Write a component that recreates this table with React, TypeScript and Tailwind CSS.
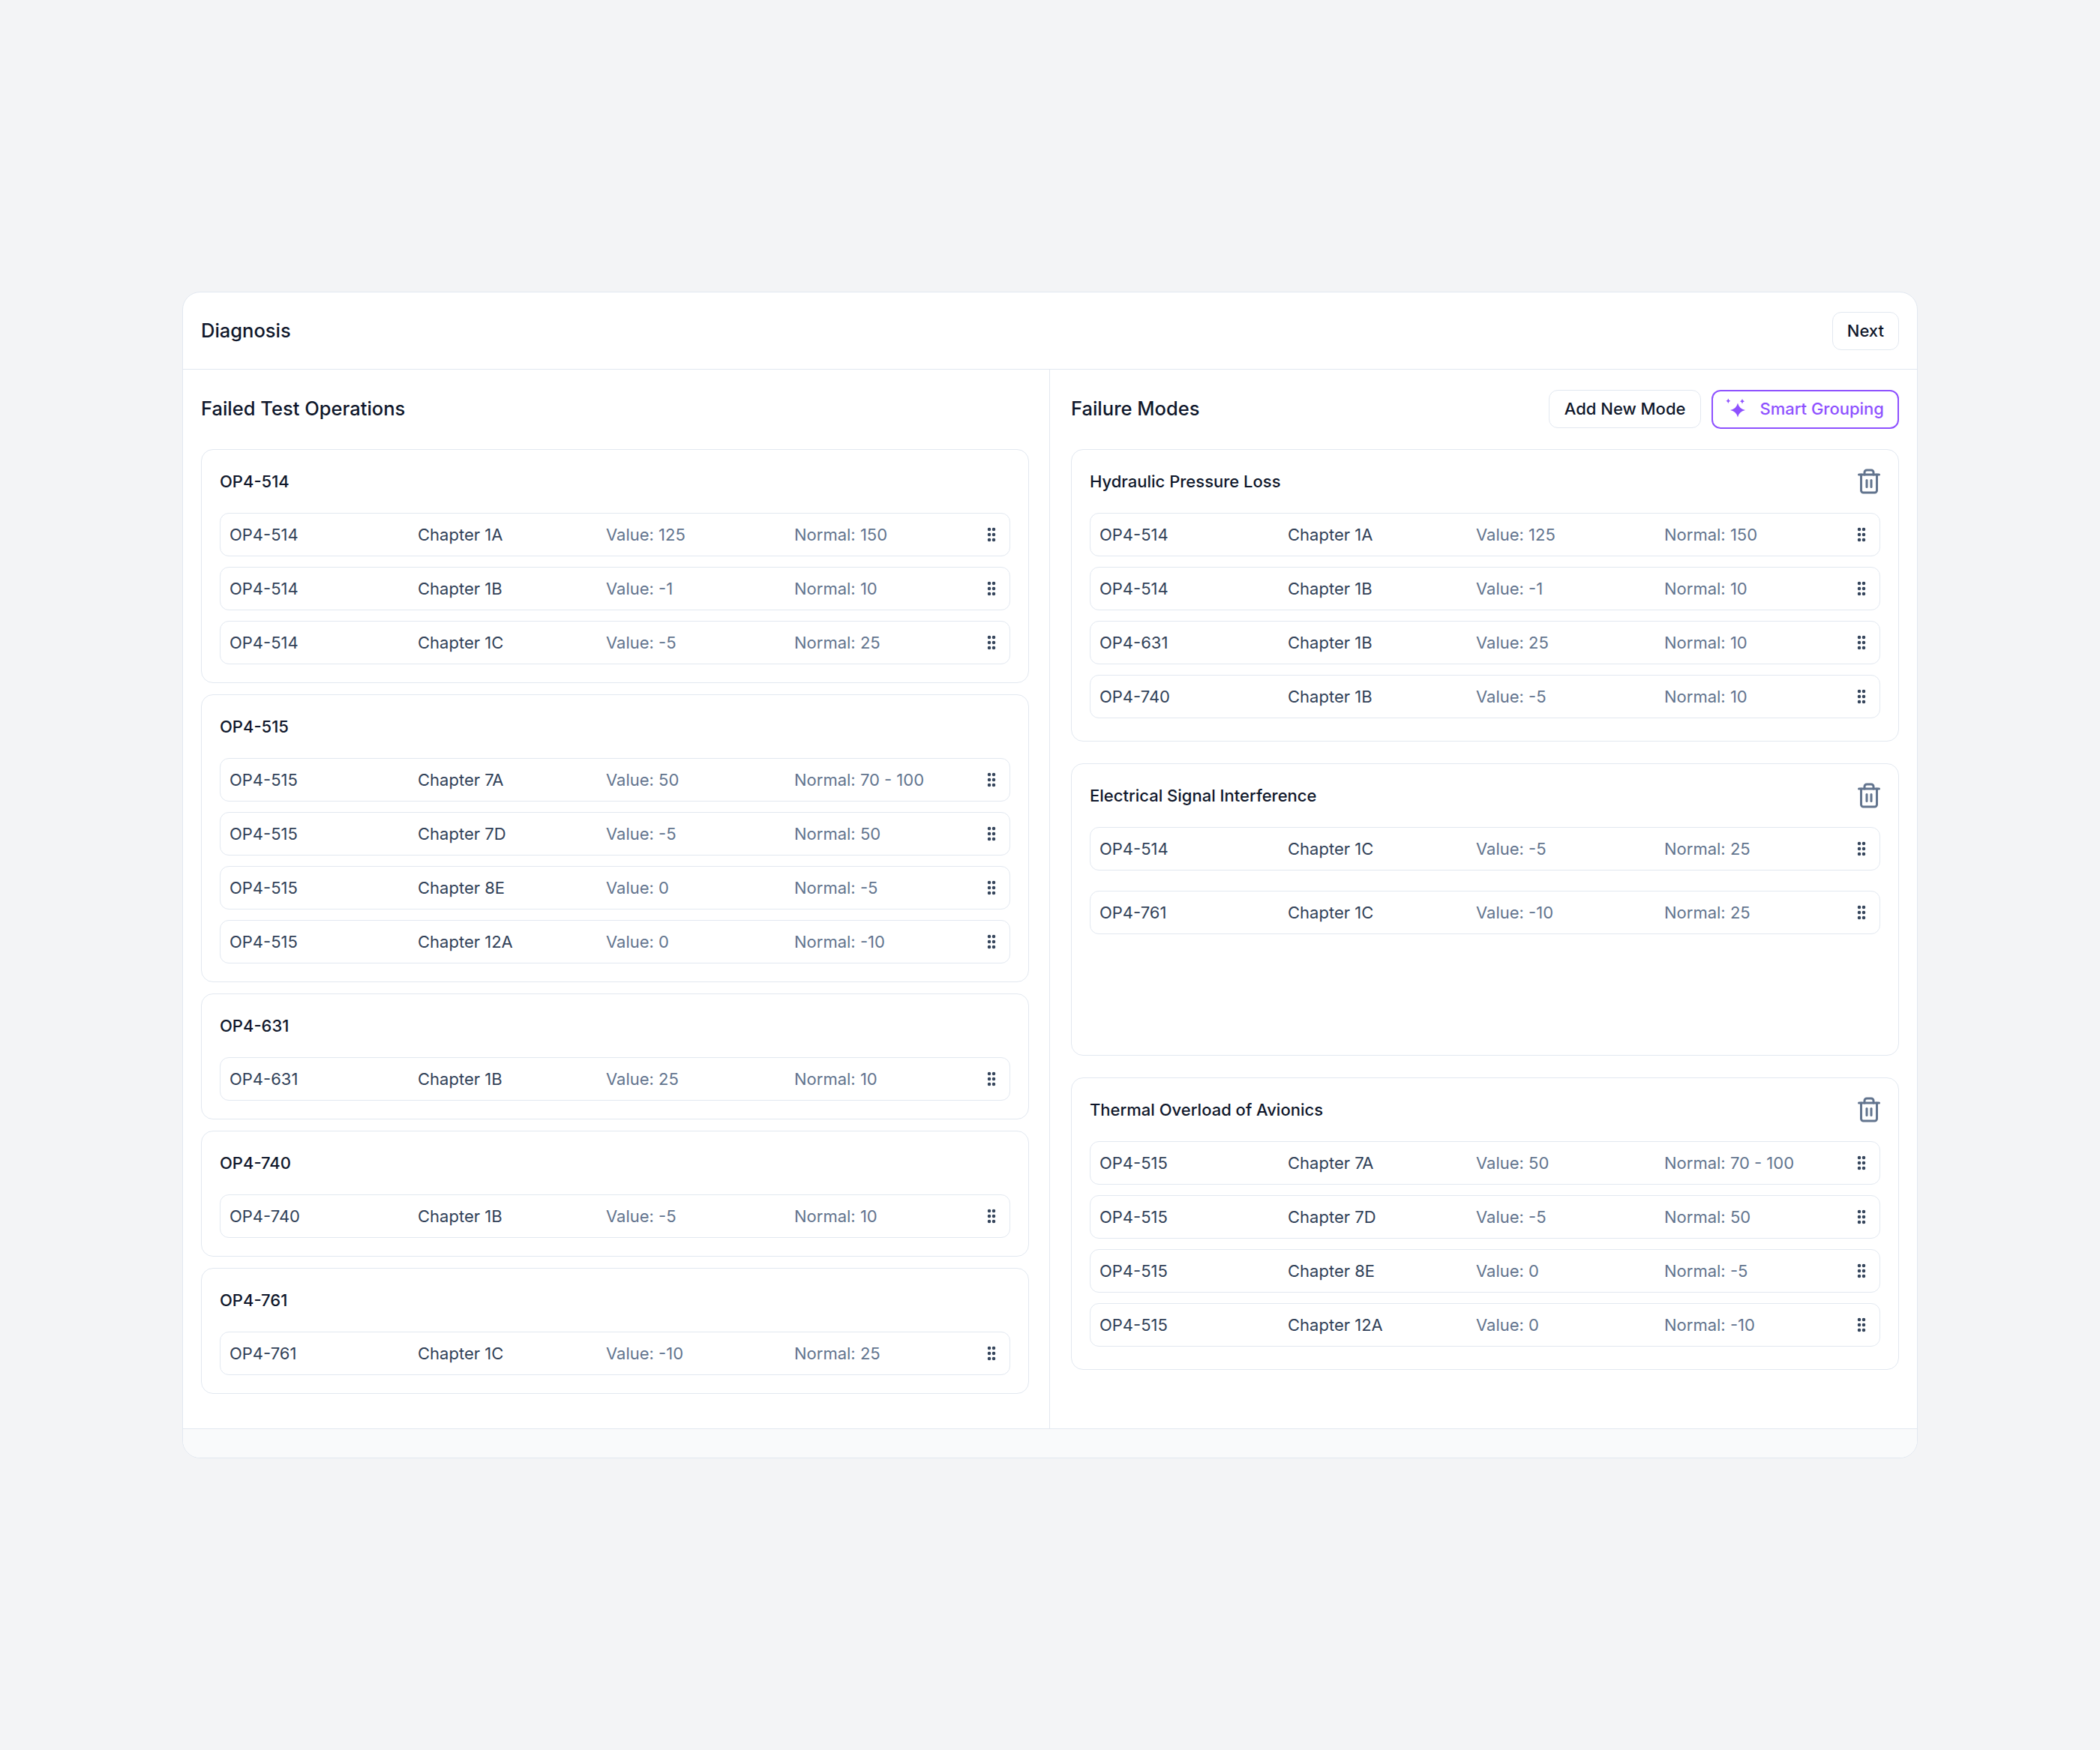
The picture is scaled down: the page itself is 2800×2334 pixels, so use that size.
import { GripVertical, Trash2 } from "lucide-react";

type Row = { op: string; chapter: string; value: string; normal: string };

const groups: { title: string; rows: Row[] }[] = [
  {
    title: "OP4-514",
    rows: [
      { op: "OP4-514", chapter: "Chapter 1A", value: "125", normal: "150" },
      { op: "OP4-514", chapter: "Chapter 1B", value: "-1", normal: "10" },
      { op: "OP4-514", chapter: "Chapter 1C", value: "-5", normal: "25" },
    ],
  },
  {
    title: "OP4-515",
    rows: [
      { op: "OP4-515", chapter: "Chapter 7A", value: "50", normal: "70 - 100" },
      { op: "OP4-515", chapter: "Chapter 7D", value: "-5", normal: "50" },
      { op: "OP4-515", chapter: "Chapter 8E", value: "0", normal: "-5" },
      { op: "OP4-515", chapter: "Chapter 12A", value: "0", normal: "-10" },
    ],
  },
  {
    title: "OP4-631",
    rows: [{ op: "OP4-631", chapter: "Chapter 1B", value: "25", normal: "10" }],
  },
  {
    title: "OP4-740",
    rows: [{ op: "OP4-740", chapter: "Chapter 1B", value: "-5", normal: "10" }],
  },
  {
    title: "OP4-761",
    rows: [{ op: "OP4-761", chapter: "Chapter 1C", value: "-10", normal: "25" }],
  },
];

const modes: { title: string; wide?: boolean; rows: Row[] }[] = [
  {
    title: "Hydraulic Pressure Loss",
    rows: [
      { op: "OP4-514", chapter: "Chapter 1A", value: "125", normal: "150" },
      { op: "OP4-514", chapter: "Chapter 1B", value: "-1", normal: "10" },
      { op: "OP4-631", chapter: "Chapter 1B", value: "25", normal: "10" },
      { op: "OP4-740", chapter: "Chapter 1B", value: "-5", normal: "10" },
    ],
  },
  {
    title: "Electrical Signal Interference",
    wide: true,
    rows: [
      { op: "OP4-514", chapter: "Chapter 1C", value: "-5", normal: "25" },
      { op: "OP4-761", chapter: "Chapter 1C", value: "-10", normal: "25" },
    ],
  },
  {
    title: "Thermal Overload of Avionics",
    rows: [
      { op: "OP4-515", chapter: "Chapter 7A", value: "50", normal: "70 - 100" },
      { op: "OP4-515", chapter: "Chapter 7D", value: "-5", normal: "50" },
      { op: "OP4-515", chapter: "Chapter 8E", value: "0", normal: "-5" },
      { op: "OP4-515", chapter: "Chapter 12A", value: "0", normal: "-10" },
    ],
  },
];

// four-point sparkle with pinched sides
const star = (cx: number, cy: number, rx: number, ry: number) => {
  const k = 0.18;
  return `M${cx} ${cy - ry} Q${cx + rx * k} ${cy - ry * k} ${cx + rx} ${cy} Q${cx + rx * k} ${cy + ry * k} ${cx} ${cy + ry} Q${cx - rx * k} ${cy + ry * k} ${cx - rx} ${cy} Q${cx - rx * k} ${cy - ry * k} ${cx} ${cy - ry}Z`;
};

const Sparkles = () => (
  <svg width="30" height="30" viewBox="0 0 30 30" className="text-violet-500">
    <path d={star(17, 16, 10, 9.5)} fill="currentColor" />
    <path d={star(4.3, 3.8, 3, 3.2)} fill="currentColor" />
    <path d={star(23, 4.2, 3, 3.2)} fill="currentColor" />
  </svg>
);

const TestRow = ({ row }: { row: Row }) => (
  <div className="flex h-[58px] items-center rounded-[12px] border border-slate-200 bg-white pl-[12px] pr-[12px] text-[22px]">
    <div className="grid flex-1 grid-cols-4">
      <span className="text-slate-700">{row.op}</span>
      <span className="text-slate-700">{row.chapter}</span>
      <span className="text-slate-500">Value: {row.value}</span>
      <span className="text-slate-500">Normal: {row.normal}</span>
    </div>
    <GripVertical size={24} strokeWidth={2.5} className="text-slate-700" />
  </div>
);

export default function App() {
  return (
    <div className="flex min-h-screen items-center justify-center bg-gray-100 font-['Inter','Noto_Sans',sans-serif] text-slate-900">
      <div className="w-[2314px] overflow-hidden rounded-[24px] border border-slate-200 bg-white">
        <div className="flex h-[103px] items-center justify-between border-b border-slate-200 px-[24px]">
          <h1 className="text-[25.5px] font-medium">Diagnosis</h1>
          <button className="h-[51px] rounded-[12px] border border-slate-200 px-[19px] text-[22px] font-medium">
            Next
          </button>
        </div>

        <div className="grid grid-cols-2 border-b border-slate-200 px-[24px]">
          <div className="border-r border-slate-200 pb-[46px] pr-[27px] pt-[27px]">
            <div className="mb-[28px] flex h-[51px] items-center">
              <h2 className="text-[25.5px] font-medium">Failed Test Operations</h2>
            </div>
            <div className="flex flex-col gap-[15px]">
              {groups.map((g) => (
                <div key={g.title} className="rounded-[16px] border border-slate-200 p-[24px]">
                  <div className="mb-[24px] flex h-[36px] items-center text-[22px] font-medium">
                    {g.title}
                  </div>
                  <div className="flex flex-col gap-[14px]">
                    {g.rows.map((r, i) => (
                      <TestRow key={i} row={r} />
                    ))}
                  </div>
                </div>
              ))}
            </div>
          </div>

          <div className="pb-[46px] pl-[28px] pt-[27px]">
            <div className="mb-[28px] flex h-[51px] items-center justify-between">
              <h2 className="text-[25.5px] font-medium">Failure Modes</h2>
              <div className="flex gap-[14px]">
                <button className="h-[51px] rounded-[12px] border border-slate-200 px-[20px] text-[22px] font-medium">
                  Add New Mode
                </button>
                <button className="flex h-[52px] items-center gap-[16px] rounded-[12px] border-2 border-violet-500 pl-[16px] pr-[18px] text-[22px] font-medium text-violet-500">
                  <Sparkles />
                  Smart Grouping
                </button>
              </div>
            </div>
            <div className="flex flex-col gap-[29px]">
              {modes.map((m) => (
                <div
                  key={m.title}
                  className="min-h-[390px] rounded-[16px] border border-slate-200 p-[24px]"
                >
                  <div className="mb-[24px] flex h-[36px] items-center justify-between">
                    <span className="text-[22px] font-medium">{m.title}</span>
                    <Trash2 size={36} strokeWidth={2} className="-mr-[3px] text-slate-500" />
                  </div>
                  <div className={m.wide ? "flex flex-col gap-[27px]" : "flex flex-col gap-[14px]"}>
                    {m.rows.map((r, i) => (
                      <TestRow key={i} row={r} />
                    ))}
                  </div>
                </div>
              ))}
            </div>
          </div>
        </div>

        <div className="h-[38px] bg-gray-50" />
      </div>
    </div>
  );
}
